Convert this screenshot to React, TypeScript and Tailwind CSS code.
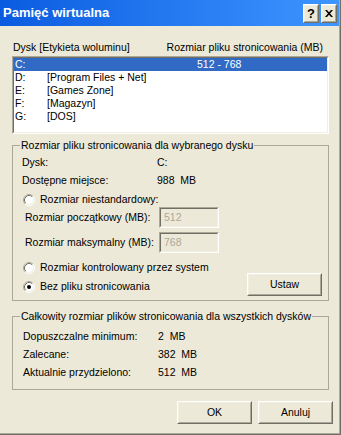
import React from "react"

const sunkenOuter = "border border-t-[#aca899] border-l-[#aca899] border-b-white border-r-white"
const sunkenInner = "border border-t-[#716f64] border-l-[#716f64] border-b-[#f1efe2] border-r-[#f1efe2]"
const raisedOuter = "border border-t-white border-l-white border-b-[#716f64] border-r-[#716f64]"
const raisedInner = "border border-t-[#f1efe2] border-l-[#f1efe2] border-b-[#aca899] border-r-[#aca899]"

interface DriveRow {
    letter: string
    label: string
    size: string
}

const drives: DriveRow[] = [
    { letter: "C:", label: "", size: "512 - 768" },
    { letter: "D:", label: "[Program Files + Net]", size: "" },
    { letter: "E:", label: "[Games Zone]", size: "" },
    { letter: "F:", label: "[Magazyn]", size: "" },
    { letter: "G:", label: "[DOS]", size: "" },
]

const Radio = ({ checked }: { checked?: boolean }) => (
    <svg width="12" height="12" viewBox="0 0 12 12" className="shrink-0">
        <circle cx="6" cy="6" r="5" fill="white" />
        <path d="M2.11 9.89 A5.5 5.5 0 0 1 9.89 2.11" fill="none" stroke="#aca899" strokeWidth="1" />
        <path d="M9.89 2.11 A5.5 5.5 0 0 1 2.11 9.89" fill="none" stroke="#ffffff" strokeWidth="1" />
        <path d="M2.82 9.18 A4.5 4.5 0 0 1 9.18 2.82" fill="none" stroke="#716f64" strokeWidth="1" />
        <path d="M9.18 2.82 A4.5 4.5 0 0 1 2.82 9.18" fill="none" stroke="#f1efe2" strokeWidth="1" />
        {checked && <circle cx="6" cy="6" r="2" fill="black" />}
    </svg>
)

const Button = ({ label, className = "" }: { label: string; className?: string }) => (
    <div className={`${raisedOuter} ${className} h-[23px] w-[75px] shrink-0`}>
        <div className={`${raisedInner} flex h-full w-full items-center justify-center`}>{label}</div>
    </div>
)

const TitleButton = ({ children }: { children: React.ReactNode }) => (
    <div className={`${raisedOuter} h-[19px] w-[16px] bg-[#ece9d8]`}>
        <div className={`${raisedInner} flex h-full w-full items-center justify-center`}>{children}</div>
    </div>
)

const DisabledInput = ({ value }: { value: string }) => (
    <div className={`${sunkenOuter} h-[21px] w-[60px] shrink-0`}>
        <div className={`${sunkenInner} flex h-full w-full items-center pl-[3px] text-[#aca899]`}>{value}</div>
    </div>
)

const App = () => {
    return (
        <div className="h-[435px] w-[341px] overflow-hidden whitespace-nowrap border-b border-r border-[#716f64] bg-[#ece9d8] font-[Liberation_Sans,Arial,sans-serif] text-[10.5px] leading-[13px] text-black">
            <div className="flex h-full flex-col border-b border-r border-[#aca899]">
                {/* title bar */}
                <div className="flex h-[26px] shrink-0 items-center bg-linear-to-r from-[#0a5be0] to-[#3d95ff] pl-[3px] pr-[2px]">
                    <span className="text-[13px] font-bold leading-[16px] text-white">Pamięć wirtualna</span>
                    <div className="ml-auto flex gap-[2px]">
                        <TitleButton>
                            <span className="text-[13px] font-bold leading-[13px]">?</span>
                        </TitleButton>
                        <TitleButton>
                            <svg width="8" height="7" viewBox="0 0 8 7">
                                <path d="M0 0h2l2 2.2L6 0h2L5 3.5 8 7H6L4 4.8 2 7H0l3-3.5z" fill="black" />
                            </svg>
                        </TitleButton>
                    </div>
                </div>

                <div className="flex flex-col pl-[12px] pr-[10px] pt-[15px]">
                    {/* list header */}
                    <div className="flex justify-between pl-[1px] pr-[6px]">
                        <span>Dysk [Etykieta woluminu]</span>
                        <span>Rozmiar pliku stronicowania (MB)</span>
                    </div>

                    {/* drive list */}
                    <div className={`${sunkenOuter} mt-[2px] h-[78px]`}>
                        <div className={`${sunkenInner} h-full bg-white`}>
                            {drives.map((d, i) => (
                                <div
                                    key={d.letter}
                                    className={`grid h-[13px] grid-cols-[33px_150px_1fr] ${i === 0 ? "bg-[#316ac5] text-white" : ""}`}
                                >
                                    <span className="pl-[1px]">{d.letter}</span>
                                    <span>{d.label}</span>
                                    <span>{d.size}</span>
                                </div>
                            ))}
                        </div>
                    </div>

                    {/* selected drive */}
                    <fieldset className="mt-[5px] border border-[#aca899]">
                        <legend className="ml-[7px] px-[1px]">Rozmiar pliku stronicowania dla wybranego dysku</legend>
                        <div className="flex flex-col">
                            <div className="mt-[4px] flex pl-[9px]">
                                <span className="w-[135px]">Dysk:</span>
                                <span>C:</span>
                            </div>
                            <div className="mt-[5px] flex pl-[9px]">
                                <span className="w-[135px]">Dostępne miejsce:</span>
                                <span>988&nbsp; MB</span>
                            </div>
                            <div className="mt-[6px] flex h-[13px] items-center gap-[5px] pl-[10px]">
                                <Radio />
                                <span>Rozmiar niestandardowy:</span>
                            </div>
                            <div className="mt-[1px] flex items-center pl-[12px]">
                                <span className="w-[134px]">Rozmiar początkowy (MB):</span>
                                <DisabledInput value="512" />
                            </div>
                            <div className="mt-[4px] flex items-center pl-[12px]">
                                <span className="w-[134px]">Rozmiar maksymalny (MB):</span>
                                <DisabledInput value="768" />
                            </div>
                            <div className="mt-[8px] flex h-[13px] items-center gap-[5px] pl-[10px]">
                                <Radio />
                                <span>Rozmiar kontrolowany przez system</span>
                            </div>
                            <div className="-mt-[1px] flex h-[23px] items-start pl-[10px] pr-[6px]">
                                <div className="mt-[7px] flex h-[13px] items-center gap-[5px]">
                                    <Radio checked />
                                    <span>Bez pliku stronicowania</span>
                                </div>
                                <Button label="Ustaw" className="ml-auto" />
                            </div>
                            <div className="h-[4px]" />
                        </div>
                    </fieldset>

                    {/* totals */}
                    <fieldset className="mt-[9px] border border-[#aca899]">
                        <legend className="ml-[7px] px-[1px]">Całkowity rozmiar plików stronicowania dla wszystkich dysków</legend>
                        <div className="flex flex-col gap-[5px] pb-[10px] pl-[10px] pt-[7px]">
                            <div className="flex">
                                <span className="w-[135px]">Dopuszczalne minimum:</span>
                                <span>2&nbsp; MB</span>
                            </div>
                            <div className="flex">
                                <span className="w-[135px]">Zalecane:</span>
                                <span>382&nbsp; MB</span>
                            </div>
                            <div className="flex">
                                <span className="w-[135px]">Aktualnie przydzielono:</span>
                                <span>512&nbsp; MB</span>
                            </div>
                        </div>
                    </fieldset>

                    {/* dialog buttons */}
                    <div className="-mr-[4px] mt-[11px] flex justify-end gap-[6px]">
                        <Button label="OK" />
                        <Button label="Anuluj" />
                    </div>
                </div>
            </div>
        </div>
    )
}

export default App
